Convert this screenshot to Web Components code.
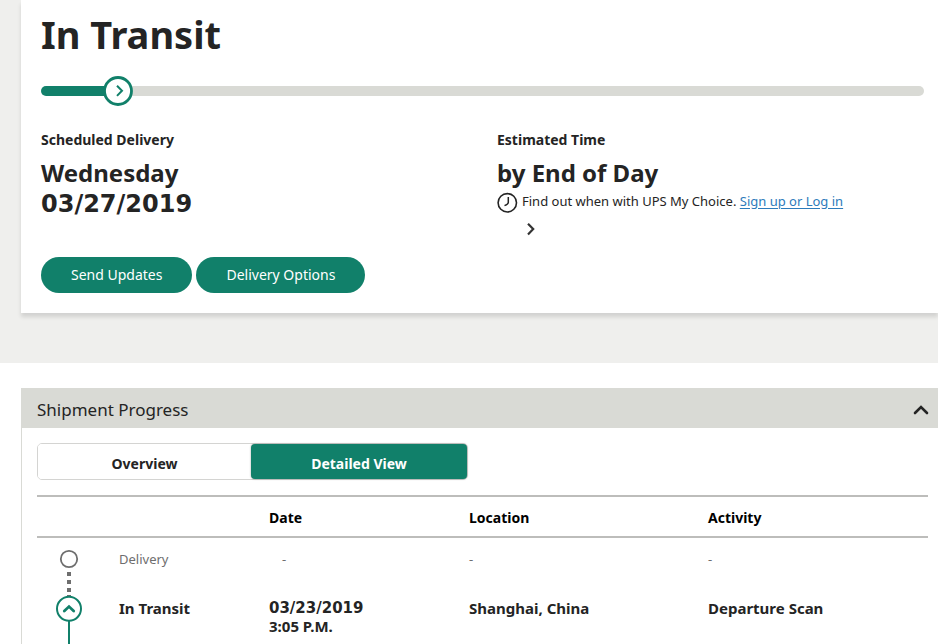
<!DOCTYPE html>
<html lang="en">
<head>
<meta charset="utf-8">
<meta name="viewport" content="width=device-width, initial-scale=1">
<title>Tracking – In Transit</title>
<style>
html { --green: #11806a; --stone: #d9dad5; --ink: #242424; --digits: "DejaVu Sans", "Noto Sans", sans-serif; }
body { margin: 0; background: #fff; color: var(--ink); font: 14px/18px "Noto Sans", "Open Sans", sans-serif; }
.date { font-family: var(--digits); }
</style>
</head>
<body>
<tracking-page>
  <status-card slot="summary" heading="In Transit">
    <progress-track slot="track" value="9"></progress-track>
    <delivery-fact label="Scheduled Delivery">Wednesday<br><span class="date">03/27/2019</span></delivery-fact>
    <delivery-fact label="Estimated Time">by End of Day
      <choice-note slot="note">Find out when with UPS My Choice.</choice-note>
    </delivery-fact>
    <pill-button slot="actions">Send Updates</pill-button>
    <pill-button slot="actions">Delivery Options</pill-button>
  </status-card>
  <collapse-panel heading="Shipment Progress">
    <view-tabs></view-tabs>
    <progress-table></progress-table>
  </collapse-panel>
</tracking-page>
<script>
function define(name, render) {
  customElements.define(name, class extends HTMLElement {
    constructor() { super(); this.attachShadow({ mode: 'open' }); }
    connectedCallback() {
      const t = document.createElement('template');
      t.innerHTML = render(this);
      this.shadowRoot.replaceChildren(t.content.cloneNode(true));
    }
  });
}

define('tracking-page', () => `
<style>
:host { display: block; }
header { background: #efefed; padding: 0 0 50px 21px; overflow: hidden; }
main { padding: 25px 0 0 21px; }
</style>
<header><slot name="summary"></slot></header>
<main><slot></slot></main>`);

define('status-card', el => `
<style>
:host { display: block; background: #fff; padding: 12px 14px 20px 20px; box-shadow: 0 4px 4px rgba(0,0,0,.12); }
h1 { margin: 0 0 20px; font-size: 38px; line-height: 44px; font-weight: 700; }
.facts { display: grid; grid-template-columns: 456fr 427fr; margin-top: 24px; min-height: 127px; align-items: start; }
.actions { display: flex; gap: 4px; }
</style>
<h1>${el.getAttribute('heading')}</h1>
<slot name="track"></slot>
<div class="facts"><slot></slot></div>
<div class="actions"><slot name="actions"></slot></div>`);

define('progress-track', el => `
<style>
:host { display: block; }
.track { display: grid; grid-template-columns: 77fr 806fr; align-items: center; height: 30px; }
.done, .rest { height: 10px; }
.done { background: var(--green); border-radius: 5px 0 0 5px; }
.rest { background: var(--stone); border-radius: 0 5px 5px 0; display: flex; align-items: center; }
svg { flex: none; width: 30px; height: 30px; margin-left: -15px; }
</style>
<div class="track" role="progressbar" aria-label="Shipment progress" aria-valuemin="0" aria-valuemax="100" aria-valuenow="${el.getAttribute('value')}">
  <div class="done"></div>
  <div class="rest"><svg viewBox="0 0 30 30" aria-hidden="true"><circle cx="15" cy="15" r="13.5" fill="#fff" stroke="#11806a" stroke-width="2.8"/><path d="M14 9.7l5 5-5 5.2" fill="none" stroke="#11806a" stroke-width="2"/></svg></div>
</div>`);

define('delivery-fact', el => `
<style>
:host { display: block; }
h2 { margin: 0 0 8px; font-size: 14px; line-height: 20px; font-weight: 700; }
.value { font-size: 24px; line-height: 30px; font-weight: 700; }
</style>
<h2>${el.getAttribute('label')}</h2>
<div class="value"><slot></slot></div>
<slot name="note"></slot>`);

define('choice-note', () => `
<style>
:host { display: block; font-size: 13px; line-height: 20px; font-weight: 400; padding-top: 3px; }
.row { display: flex; align-items: flex-start; gap: 4px; white-space: nowrap; }
a { color: #2c7bbb; text-decoration: underline; text-underline-offset: 2px; }
svg { display: block; flex: none; }
.next { margin: 9px 0 0 28px; }
</style>
<div class="row">
  <svg width="21" height="22" viewBox="0 0 21 22" aria-hidden="true"><circle cx="10.3" cy="11.8" r="9.2" fill="none" stroke="#242424" stroke-width="1.6"/><path d="M11.3 6v5.4q0 1.6-3.8 3.2" fill="none" stroke="#242424" stroke-width="1.5"/></svg>
  <span><slot></slot> <a href="#login">Sign up or Log in</a></span>
</div>
<svg class="next" width="12" height="14" viewBox="0 0 12 14" aria-hidden="true"><path d="M3 1.7l5.2 5.4L3 12.4" fill="none" stroke="#333" stroke-width="2.2"/></svg>`);

define('pill-button', () => `
<style>
:host { display: block; }
button { border: 0; border-radius: 18px; height: 36px; padding: 0 30px; background: var(--green); color: #fff; font: inherit; white-space: nowrap; }
</style>
<button type="button"><slot></slot></button>`);

define('collapse-panel', el => `
<style>
:host { display: block; }
h2 { margin: 0; font: inherit; }
button { display: flex; justify-content: space-between; align-items: center; width: 100%; height: 40px; padding: 4px 9px 0 16px; border: 0; background: var(--stone); color: inherit; font: inherit; font-size: 17px; line-height: 24px; text-align: left; }
.body { border-left: 1px solid var(--stone); padding: 15px 10px 0 15px; }
</style>
<h2><button type="button" aria-expanded="true" aria-controls="body">${el.getAttribute('heading')}
<svg width="16" height="12" viewBox="0 0 16 12" aria-hidden="true"><path d="M2 9l6-6 6 6" fill="none" stroke="#242424" stroke-width="2.6" stroke-linecap="round"/></svg></button></h2>
<div class="body" id="body"><slot></slot></div>`);

define('view-tabs', () => `
<style>
:host { display: block; margin-bottom: 15px; }
div { display: grid; grid-template-columns: 213fr 216fr; max-width: 431px; height: 37px; box-sizing: border-box; border: 1px solid #d4d4d2; border-radius: 5px; }
button { border: 0; padding: 4px 0 0; background: #fff; color: inherit; font: inherit; font-weight: 700; border-radius: 4px; }
button[aria-selected=true] { background: var(--green); color: #fff; box-shadow: 0 0 2px rgba(0,0,0,.4); }
</style>
<div role="tablist"><button type="button" role="tab" aria-selected="false">Overview</button><button type="button" role="tab" aria-selected="true">Detailed View</button></div>`);

define('progress-table', () => `
<style>
:host { display: block; }
table { width: 100%; table-layout: fixed; border-collapse: separate; border-spacing: 0; }
.c1 { width: 82px; } .c2 { width: 150px; } .c3 { width: 200px; } .c4 { width: 239px; }
th, td { padding: 0; text-align: left; vertical-align: top; }
thead th { border: solid #bdbdbb; border-width: 2px 0; padding: 12px 0 9px; color: #000; font-weight: 700; }
tbody td, tbody th { padding-top: 12px; }
tbody td.mark { padding: 0; }
.pending { color: #6e6e6e; font-size: 13px; }
.pending th { font-weight: 400; }
.pending .when { padding-left: 13px; }
.current { font-size: 15px; line-height: 18px; font-weight: 700; }
.current td, .current th { padding-top: 11px; }
.date, .time { display: block; }
.date { font-family: var(--digits); }
svg { display: block; }
</style>
<table>
<colgroup><col class="c1"><col class="c2"><col class="c3"><col class="c4"><col></colgroup>
<thead><tr><th></th><th></th><th scope="col">Date</th><th scope="col">Location</th><th scope="col">Activity</th></tr></thead>
<tbody>
<tr class="pending">
  <td class="mark"><svg width="64" height="50" viewBox="0 0 64 50" aria-hidden="true"><circle cx="32" cy="21" r="8.2" fill="#fff" stroke="#6e6e6e" stroke-width="1.8"/><path d="M30 34h4v4h-4zM30 42h4v4h-4z" fill="#6e6e6e"/></svg></td>
  <th scope="row">Delivery</th><td class="when">-</td><td>-</td><td>-</td>
</tr>
<tr class="current">
  <td class="mark"><svg width="64" height="56" viewBox="0 0 64 56" aria-hidden="true"><path d="M30 0h4v4h-4zM30 7h4v3h-4z" fill="#6e6e6e"/><path d="M32 33v23" stroke="#11806a" stroke-width="2"/><circle cx="32" cy="20.7" r="12" fill="#fff" stroke="#11806a" stroke-width="2"/><path d="M27.3 23l4.7-4.4 4.7 4.4" fill="none" stroke="#11806a" stroke-width="2.8" stroke-linecap="round"/></svg></td>
  <th scope="row">In Transit</th><td><span class="date">03/23/2019</span><span class="time">3:05 P.M.</span></td><td>Shanghai, China</td><td>Departure Scan</td>
</tr>
</tbody>
</table>`);
</script>
</body>
</html>
